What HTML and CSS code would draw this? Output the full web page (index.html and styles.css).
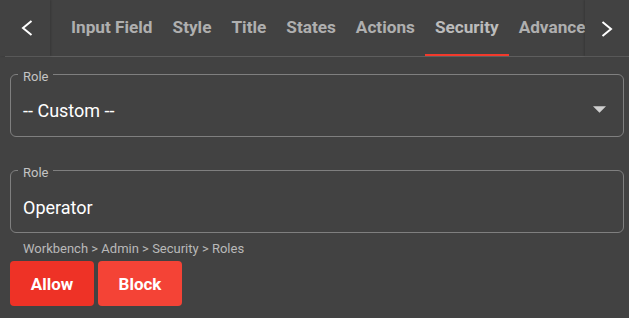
FILE: index.html
```html
<!DOCTYPE html>
<html lang="en">
<head>
<meta charset="UTF-8" />
<meta name="viewport" content="width=device-width, initial-scale=1" />
<title>Security</title>
<link rel="stylesheet" href="styles.css">
</head>
<body>
  <div class="tabbar">
    <button class="scroll-btn scroll-left" aria-label="Scroll left">
      <svg viewBox="0 0 12 16" aria-hidden="true"><path d="M10.5 1 L2 8 L10.5 15" /></svg>
    </button>
    <div class="tabs">
      <div class="tab">Input Field</div>
      <div class="tab">Style</div>
      <div class="tab">Title</div>
      <div class="tab">States</div>
      <div class="tab">Actions</div>
      <div class="tab active">Security</div>
      <div class="tab">Advanced</div>
    </div>
    <button class="scroll-btn scroll-right" aria-label="Scroll right">
      <svg viewBox="0 0 12 16" aria-hidden="true"><path d="M1.5 1 L10 8 L1.5 15" /></svg>
    </button>
  </div>
  <div class="tabline"></div>

  <div class="content">
    <fieldset class="field field-select">
      <legend>Role</legend>
      <div class="field-row">
        <span class="value">-- Custom --</span>
        <svg class="caret" viewBox="0 0 12 6" aria-hidden="true"><path d="M0 0 H12 L6 6 Z" /></svg>
      </div>
    </fieldset>

    <fieldset class="field field-text">
      <legend>Role</legend>
      <div class="field-row">
        <span class="value">Operator</span>
      </div>
    </fieldset>

    <div class="hint">Workbench &gt; Admin &gt; Security &gt; Roles</div>

    <div class="actions">
      <button class="btn btn-allow">Allow</button>
      <button class="btn btn-block">Block</button>
    </div>
  </div>
</body>
</html>
```

FILE: styles.css
```css
:root {
  --bg: #424242;
  --tab-text: #afafaf;
  --tab-active: #bcbcbc;
  --indicator: #f23a2c;
  --line: #5e5e5e;
  --field-border: #7f7f7f;
  --label: #c4c4c4;
  --hint: #b9b9b9;
  --allow: #ee3226;
  --block: #f44336;
}
html, body {
  margin: 0;
  background: var(--bg);
  font-family: Roboto, 'Liberation Sans', sans-serif;
  overflow: hidden;
}
.tabbar {
  display: flex;
  height: 56px;
}
.scroll-btn {
  flex: none;
  height: 56px;
  background: var(--bg);
  border: none;
  padding: 0;
  display: flex;
  align-items: center;
  justify-content: center;
  position: relative;
  z-index: 2;
}
.scroll-left {
  width: 50px;
  box-shadow: 1px 0 2px rgba(0, 0, 0, 0.18);
}
.scroll-right {
  width: 44px;
  box-shadow: -1px 0 2px rgba(0, 0, 0, 0.18);
}
.scroll-btn svg {
  width: 12px;
  height: 16px;
  fill: none;
  stroke: #fff;
  stroke-width: 2;
}
.scroll-left svg { margin-left: 3px; }
.scroll-right svg { margin-top: 1px; }
.tabs {
  flex: 1;
  display: flex;
  overflow: hidden;
  padding-left: 11px;
  min-width: 0;
}
.tab {
  flex: none;
  padding: 0 10px;
  height: 56px;
  box-sizing: border-box;
  display: flex;
  align-items: center;
  font-size: 17.2px;
  font-weight: 700;
  color: var(--tab-text);
  border-bottom: 2px solid transparent;
  white-space: nowrap;
}
.tab.active {
  color: var(--tab-active);
  border-bottom-color: var(--indicator);
}
.tabline {
  height: 1px;
  background: var(--line);
  margin-left: 5px;
}
.content {
  padding: 7px 5px 0 10px;
}
.field {
  margin: 0;
  border: 1px solid var(--field-border);
  border-radius: 6px;
  padding: 15px 12px 13px;
  min-width: 0;
}
.field legend {
  font-size: 13px;
  line-height: 15px;
  color: var(--label);
  padding: 5px 5px 0;
  margin-left: -5px;
}
.field-text {
  margin-top: 23px;
  padding: 16px 12px 12px;
}
.field-row {
  display: flex;
  align-items: center;
  justify-content: space-between;
  height: 24px;
}
.value {
  font-size: 18px;
  line-height: 24px;
  color: #fff;
}
.caret {
  width: 13px;
  height: 7px;
  fill: #cfcfcf;
  margin-right: 5px;
  margin-top: -4px;
}
.hint {
  margin: 8px 0 0 13px;
  font-size: 13px;
  line-height: 16px;
  color: var(--hint);
}
.actions {
  display: flex;
  gap: 4px;
  margin-top: 4px;
}
.btn {
  width: 84px;
  height: 45px;
  border: none;
  border-radius: 4px;
  color: #fff;
  font-family: inherit;
  font-size: 17px;
  font-weight: 700;
  padding: 0;
}
.btn-allow { background: var(--allow); }
.btn-block { background: var(--block); }
```
